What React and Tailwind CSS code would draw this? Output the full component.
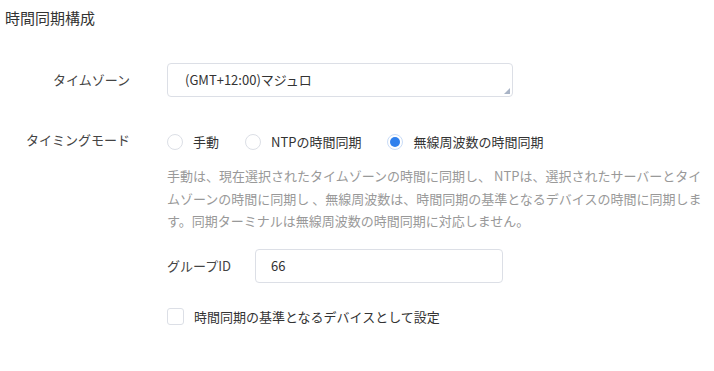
import { useState } from 'react';

const font = { fontFamily: '"Noto Sans CJK JP", "Liberation Sans", sans-serif' };

function Radio({ checked, label, onClick }) {
    return (
        <label className="flex items-center cursor-pointer mr-[26px]" onClick={onClick}>
            <span
                className={
                    'w-[16px] h-[16px] rounded-full border flex items-center justify-center bg-white ' +
                    (checked ? 'border-[#c9dcf7]' : 'border-[#dcdfe6]')
                }
            >
                {checked && <span className="w-[10px] h-[10px] rounded-full bg-[#2f80ed]" />}
            </span>
            <span className="ml-[10px] text-[13px] text-[#333]">{label}</span>
        </label>
    );
}

export default function App() {
    const [mode, setMode] = useState('radio');
    const [groupId, setGroupId] = useState('66');
    const [isBase, setIsBase] = useState(false);

    return (
        <div className="w-[714px] h-[371px] bg-white overflow-hidden" style={font}>
            <h1 className="pl-[5px] pt-[8px] text-[15px] leading-[20px] text-[#333]">時間同期構成</h1>

            {/* Time zone */}
            <div className="flex items-center mt-[35px]">
                <div className="w-[130px] text-right text-[13px] text-[#444]">タイムゾーン</div>
                <div className="ml-[37px] relative w-[346px] h-[34px] border border-[#dcdfe6] rounded-[4px] flex items-center pl-[17px] text-[13px] text-[#333]">
                    (GMT+12:00)マジュロ
                    <svg className="absolute right-[2px] bottom-[2px]" width="6" height="6" viewBox="0 0 6 6">
                        <polygon points="6,0 6,6 0,6" fill="#a9b4c6" />
                    </svg>
                </div>
            </div>

            {/* Timing mode */}
            <div className="flex mt-[35px]">
                <div className="w-[130px] text-right text-[13px] text-[#444] leading-[16px]">タイミングモード</div>
                <div className="ml-[37px]">
                    <div className="flex items-center h-[20px]">
                        <Radio checked={mode === 'manual'} label="手動" onClick={() => setMode('manual')} />
                        <Radio checked={mode === 'ntp'} label="NTPの時間同期" onClick={() => setMode('ntp')} />
                        <Radio checked={mode === 'radio'} label="無線周波数の時間同期" onClick={() => setMode('radio')} />
                    </div>
                    <p className="mt-[13px] w-[547px] text-[13px] leading-[22.5px] text-[#999]">
                        手動は、現在選択されたタイムゾーンの時間に同期し、 NTPは、選択されたサーバーとタイムゾーンの時間に同期し 、無線周波数は、時間同期の基準となるデバイスの時間に同期します。同期ターミナルは無線周波数の時間同期に対応しません。
                    </p>

                    {/* Group ID */}
                    <div className="flex items-center mt-[16px]">
                        <span className="w-[88px] text-[13px] text-[#444]">グループID</span>
                        <input
                            className="w-[248px] h-[34px] border border-[#dcdfe6] rounded-[4px] pl-[15px] text-[13px] text-[#333] outline-none"
                            value={groupId}
                            onChange={(e) => setGroupId(e.target.value)}
                        />
                    </div>

                    {/* Base device */}
                    <label className="flex items-center mt-[24px] cursor-pointer" onClick={() => setIsBase(!isBase)}>
                        <span className="w-[17px] h-[17px] border border-[#dcdfe6] rounded-[3px] bg-white" />
                        <span className="ml-[10px] text-[13px] text-[#333]">時間同期の基準となるデバイスとして設定</span>
                    </label>
                </div>
            </div>
        </div>
    );
}
